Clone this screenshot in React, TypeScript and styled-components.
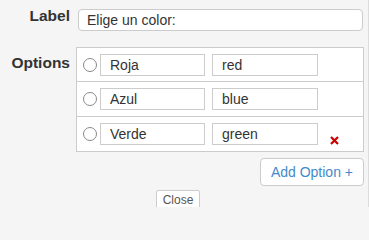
import React from "react";
import styled, { createGlobalStyle } from "styled-components";

const GlobalStyle = createGlobalStyle`
  html, body {
    margin: 0;
    padding: 0;
    background: #f5f5f5;
    font-family: "Liberation Sans", Arial, sans-serif;
    color: #333;
  }
  * { box-sizing: border-box; }
`;

const Page = styled.div`
  width: 369px;
  height: 207px;
  overflow: hidden;
  border-right: 1px solid #dcdcdc;
  padding: 7px 4px 0 0;
`;

const Form = styled.div`
  display: grid;
  grid-template-columns: 70px 1fr;
  column-gap: 6px;
  row-gap: 16px;
  align-items: start;
`;

const FieldLabel = styled.div<{ $top: number }>`
  font-size: 15.5px;
  font-weight: bold;
  line-height: 17px;
  text-align: right;
  color: #333;
  padding-top: ${(p) => p.$top}px;
`;

const LabelInput = styled.input`
  display: block;
  margin: 2px 1px 0 2px;
  height: 22px;
  width: calc(100% - 3px);
  border: 1px solid #ccc;
  border-radius: 4px;
  background: #fff;
  padding: 0 8px;
  font-family: "Liberation Sans", Arial, sans-serif;
  font-size: 14px;
  color: #333;
  outline: none;
`;

const OptionsColumn = styled.div`
  display: flex;
  flex-direction: column;
  align-items: flex-end;
`;

const OptionsTable = styled.div`
  width: 100%;
  border: 1px solid #ccc;
  background: #fff;
`;

const OptionRow = styled.div<{ $first?: boolean }>`
  display: flex;
  align-items: center;
  height: ${(p) => (p.$first ? 33 : 35)}px;
  padding: 0 6px;
  border-top: ${(p) => (p.$first ? "none" : "1px solid #ccc")};
`;

const Radio = styled.span`
  display: inline-block;
  width: 14px;
  height: 14px;
  border: 1px solid #8a8a8a;
  border-radius: 50%;
  background: #fff;
  margin-right: 3px;
`;

const OptionInput = styled.input<{ $w: number }>`
  display: block;
  width: ${(p) => p.$w}px;
  height: 22px;
  border: 1px solid #ccc;
  border-radius: 0;
  background: #fff;
  padding: 0 9px;
  font-family: "Liberation Sans", Arial, sans-serif;
  font-size: 14px;
  color: #333;
  outline: none;
  margin-right: 7px;
`;

const RemoveIcon = styled.svg`
  width: 9px;
  height: 9px;
  margin: 12px 0 0 5px;
`;

const AddButton = styled.button`
  margin-top: 6px;
  height: 28px;
  padding: 0 10px;
  border: 1px solid #ccc;
  border-radius: 4px;
  background: #fff;
  color: #428bca;
  font-family: "Liberation Sans", Arial, sans-serif;
  font-size: 14px;
  cursor: pointer;
`;

const Footer = styled.div`
  display: flex;
  justify-content: center;
  padding: 4px 8px 0 0;
`;

const CloseButton = styled.button`
  height: 20px;
  padding: 0 6px;
  border: 1px solid #ccc;
  border-radius: 2px;
  background: #fff;
  color: #555;
  font-family: "Liberation Sans", Arial, sans-serif;
  font-size: 12px;
  line-height: 16px;
  cursor: pointer;
`;

const options = [
  { label: "Roja", value: "red" },
  { label: "Azul", value: "blue" },
  { label: "Verde", value: "green" },
];

export default function App() {
  return (
    <>
      <GlobalStyle />
      <Page>
        <Form>
          <FieldLabel $top={0}>Label</FieldLabel>
          <LabelInput defaultValue="Elige un color:" />
          <FieldLabel $top={7}>Options</FieldLabel>
          <OptionsColumn>
            <OptionsTable>
              {options.map((o, i) => (
                <OptionRow key={o.value} $first={i === 0}>
                  <Radio />
                  <OptionInput $w={105} defaultValue={o.label} />
                  <OptionInput $w={106} defaultValue={o.value} />
                  {i === options.length - 1 && (
                    <RemoveIcon viewBox="0 0 9 9">
                      <path
                        d="M1 1 L8 8 M8 1 L1 8"
                        stroke="#cc0000"
                        strokeWidth="2.2"
                        strokeLinecap="butt"
                      />
                    </RemoveIcon>
                  )}
                </OptionRow>
              ))}
            </OptionsTable>
            <AddButton>Add Option +</AddButton>
          </OptionsColumn>
        </Form>
        <Footer>
          <CloseButton>Close</CloseButton>
        </Footer>
      </Page>
    </>
  );
}
